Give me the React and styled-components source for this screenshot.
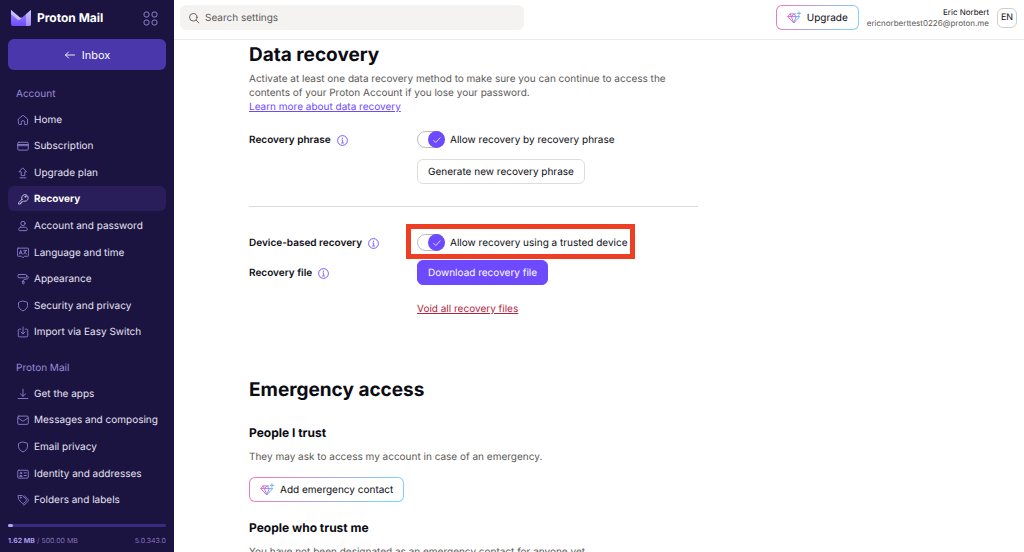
import React from "react";
import styled, { createGlobalStyle, css } from "styled-components";

const GlobalStyle = createGlobalStyle`
  *, *::before, *::after { box-sizing: border-box; }
  html, body, #root { height: 100%; }
  body {
    margin: 0;
    background: #ffffff;
    color: #0c0c14;
    font-family: Inter, "Liberation Sans", sans-serif;
    font-size: 10px;
    line-height: 14px;
    text-rendering: geometricPrecision;
  }
  h1, h2, h3, p, ul { margin: 0; padding: 0; }
  ul { list-style: none; }
  button, input { font: inherit; color: inherit; text-rendering: inherit; }
`;

const Page = styled.div`
  display: flex;
  height: 100vh;
  overflow: hidden;
`;

/* ---------- Sidebar ---------- */

const Sidebar = styled.aside`
  display: flex;
  flex-direction: column;
  flex: 0 0 174px;
  min-width: 0;
  padding: 0 8px;
  background: #1b1340;
  color: #e6e3f3;
`;

const Brand = styled.div`
  display: flex;
  align-items: center;
  justify-content: space-between;
  height: 36px;
  padding: 0 8px 0 3px;
`;

const BrandLink = styled.a`
  display: flex;
  align-items: center;
  gap: 6px;
  color: #ffffff;
  font-size: 12px;
  font-weight: 700;
  line-height: 20px;
  text-decoration: none;
`;

const AppsButton = styled.button`
  display: flex;
  padding: 0;
  border: 0;
  background: none;
  color: #8d7fc9;
`;

const InboxButton = styled.button`
  display: flex;
  align-items: center;
  justify-content: center;
  gap: 6px;
  flex: none;
  height: 31px;
  margin: 3px 0 10px;
  border: 0;
  border-radius: 6px;
  background: #4a37ab;
  color: #ffffff;
  font-size: 11px;
`;

const Nav = styled.nav`
  flex: 1;
  min-height: 0;
  overflow: hidden;
`;

const NavTitle = styled.h2`
  padding: 7px 8px 5px;
  color: #9c8cd9;
  font-size: 10px;
  font-weight: 400;
  line-height: 14px;
`;

const NavList = styled.ul`
  display: grid;
  grid-auto-rows: 1fr;
  grid-template-columns: minmax(0, 1fr);
  min-height: ${(p) => p.$height}px;
  margin-bottom: 9px;
`;

const NavItem = styled.li`
  display: flex;
  align-items: center;
`;

const NavLink = styled.a`
  display: flex;
  flex: 1;
  align-items: center;
  gap: 5px;
  min-width: 0;
  height: 25px;
  padding: 1px 0 0 9px;
  border-radius: 6px;
  color: #e6e3f3;
  text-decoration: none;
  white-space: nowrap;
  svg { flex: none; color: #9080d2; }
  ${(p) =>
    p.$active &&
    css`
      background: #291e59;
      color: #ffffff;
      font-weight: 700;
      svg { color: #cfc8ee; }
    `}
`;

const Storage = styled.footer`
  flex: none;
  padding-bottom: 4px;
`;

const Track = styled.div`
  height: 3px;
  margin-bottom: 7px;
  border-radius: 2px;
  background: #3b2b80;
`;

const Fill = styled.div`
  width: 5px;
  height: 3px;
  border-radius: 2px;
  background: #b5a6f5;
`;

const StorageText = styled.div`
  display: flex;
  justify-content: space-between;
  color: #8375bd;
  font-size: 7px;
  line-height: 14px;
  strong { color: #a999ea; font-weight: 700; }
`;

/* ---------- Main ---------- */

const Main = styled.div`
  display: flex;
  flex: 1;
  flex-direction: column;
  min-width: 0;
`;

const Header = styled.header`
  display: flex;
  align-items: center;
  justify-content: space-between;
  flex: none;
  height: 40px;
  padding: 0 7px 4px 6px;
  border-bottom: 1px solid #eaeaea;
`;

const Search = styled.label`
  display: flex;
  align-items: center;
  gap: 5px;
  flex: 0 1 344px;
  height: 25px;
  padding: 0 8px;
  border-radius: 6px;
  background: #f4f3f2;
  color: #5c5958;
`;

const SearchInput = styled.input`
  flex: 1;
  min-width: 0;
  padding: 0;
  border: 0;
  outline: 0;
  background: none;
  &::placeholder { color: #5c5958; opacity: 1; }
`;

const Account = styled.div`
  display: flex;
  align-items: center;
  gap: 8px;
`;

const Button = styled.button`
  display: inline-flex;
  align-items: center;
  justify-content: center;
  gap: 6px;
  height: 25px;
  padding: 0 10px;
  border: 1px solid #dedddc;
  border-radius: 6px;
  background: #ffffff;
  white-space: nowrap;
  ${(p) =>
    p.$variant === "solid" &&
    css`
      border-color: #6d4aff;
      background: #6d4aff;
      color: #ffffff;
    `}
  ${(p) =>
    p.$variant === "gradient" &&
    css`
      border-color: transparent;
      background:
        linear-gradient(#ffffff, #ffffff) padding-box,
        linear-gradient(120deg, #f078be 5%, #b9a2e0 45%, #7fd2fb 90%) border-box;
    `}
`;

const UserText = styled.div`
  color: #5c5958;
  font-size: 8px;
  line-height: 11px;
  text-align: right;
  strong { display: block; color: #0c0c14; font-weight: 400; }
`;

const Avatar = styled.button`
  width: 20px;
  height: 20px;
  padding: 0;
  border: 1px solid #d1cfcd;
  border-radius: 6px;
  background: #ffffff;
  font-size: 9px;
  line-height: 14px;
`;

const Content = styled.main`
  flex: 1;
  min-height: 0;
  padding: 2px 40px 40px 75px;
  overflow: auto;
  scrollbar-width: none;
`;

const Section = styled.section`
  max-width: 449px;
  margin-bottom: ${(p) => p.$after || 0}px;
`;

const Title = styled.h1`
  font-size: 19px;
  font-weight: 700;
  line-height: 26px;
`;

const Subtitle = styled.h2`
  margin-bottom: 8px;
  padding-top: 1px;
  font-size: 12px;
  font-weight: 700;
  line-height: 18px;
`;

const Text = styled.p`
  max-width: 420px;
  color: #5c5958;
  line-height: 14px;
`;

const TextLink = styled.a`
  color: ${(p) => (p.$danger ? "#b4233c" : "#6d4aff")};
  text-decoration: underline;
`;

const Settings = styled.div`
  padding: ${(p) => p.$top}px 0 ${(p) => p.$bottom || 0}px;
  ${(p) => p.$ruled && css`border-bottom: 1px solid #dadada;`}
`;

const Row = styled.div`
  display: grid;
  grid-template-columns: 168px 1fr;
  align-items: center;
  margin-bottom: ${(p) => p.$after || 0}px;
`;

const RowLabel = styled.div`
  display: flex;
  align-items: center;
  gap: 6px;
  font-weight: 600;
`;

const InfoButton = styled.button`
  display: flex;
  padding: 1px 0 0;
  border: 0;
  background: none;
  color: #6d4aff;
`;

const RowControl = styled.div`
  position: relative;
  grid-column: 2;
  justify-self: start;
`;

const ToggleLabel = styled.label`
  display: flex;
  align-items: center;
  gap: 5px;
  white-space: nowrap;
`;

const ToggleInput = styled.input`
  appearance: none;
  display: grid;
  width: 28px;
  height: 17px;
  margin: 0;
  border: 1px solid #b9b8c0;
  border-radius: 9px;
  background: #ffffff;
  grid-area: 1 / 1;
`;

const ToggleBox = styled.span`
  display: grid;
`;

const Knob = styled.span`
  display: grid;
  place-items: center;
  justify-self: end;
  grid-area: 1 / 1;
  z-index: 1;
  width: 17px;
  height: 17px;
  border-radius: 50%;
  background: #6d4aff;
  color: #ffffff;
  pointer-events: none;
`;

const Highlight = styled.div`
  position: absolute;
  inset: -10px -7px -8px -11px;
  border: 5px solid #ec3f23;
  pointer-events: none;
`;

/* ---------- Icons ---------- */

const Icon = ({ size = 12, children }) => (
  <svg width={size} height={size} viewBox="0 0 16 16" fill="none" stroke="currentColor"
    strokeWidth="1.2" strokeLinecap="round" strokeLinejoin="round" aria-hidden="true">
    {children}
  </svg>
);

const icons = {
  home: <path d="M2 6.6 7.1 2.3a1.4 1.4 0 0 1 1.8 0L14 6.6V13a1 1 0 0 1-1 1h-2.8v-3a2.2 2.2 0 0 0-4.4 0v3H3a1 1 0 0 1-1-1z" />,
  card: <><rect x="1" y="3" width="14" height="10.5" rx="1.5" /><path d="M1 6h14M1 7.6h14" /></>,
  upgrade: <path d="M8 1.5 12.8 6.4H10.4V11.5H5.6V6.4H3.2zM4 14.4h8" />,
  key: <><path d="M6.6 8.6 2 12.900v1.800h2.700v-1.500h1.600v-1.600h1.500l.9-1A4.400 4.400 0 1 0 6.600 8.600z" /><circle cx="11.200" cy="4.900" r=".8" /></>,
  user: <><circle cx="8" cy="4.6" r="2.9" /><path d="M4.7 9.6h6.6c1.4 0 2.4 1.6 2.4 3.3 0 .9-.5 1.3-1.3 1.3H3.6c-.8 0-1.3-.4-1.3-1.3 0-1.7 1-3.3 2.4-3.3z" /></>,
  language: <><path d="M1.500 1.500h13a1 1 0 0 1 1 1v8.800a1 1 0 0 1-1 1H10l-2 2.200-2-2.200H1.500a1 1 0 0 1-1-1V2.500a1 1 0 0 1 1-1z" /><path d="m3.200 9.400 1.800-5 1.800 5M3.800 8h2.400M9 4.500h4M9 9.400l3.500-4.800M9.400 6.400l3.600 3" /></>,
  roller: <><rect x="1.3" y="2" width="11.4" height="4.3" rx="1.3" /><path d="M12.7 4.1h1a1.3 1.3 0 0 1 1.3 1.3v1.1a1.3 1.3 0 0 1-1.1 1.3L9.5 8.7a1.3 1.3 0 0 0-1 1.2v1M7.4 10.9h2v2.9a.9.9 0 0 1-.9.9h-.2a.9.9 0 0 1-.9-.9z" /></>,
  shield: <path d="m8 1.4 5.3 1.4c.4.1.7.4.7.9v3.8c0 3.1-2.6 5.6-6 7.1-3.400-1.500-6-4-6-7.100V3.700c0-.5.3-.8.7-.9z" />,
  importBox: <path d="M5 4.200H3A1.300 1.300 0 0 0 1.700 5.500v7.700A1.300 1.300 0 0 0 3 14.500h10a1.300 1.300 0 0 0 1.300-1.300V5.500A1.300 1.300 0 0 0 13 4.200h-2M8 1.300v9.200M5.200 7.900 8 10.600l2.800-2.700" />,
  download: <path d="M8 1.500v9.500M4.500 7.700 8 11l3.500-3.300M1.500 14h13" />,
  mail: <><rect x="1" y="2.800" width="14" height="11" rx="1.500" /><path d="m1.300 5 5.500 4a2 2 0 0 0 2.400 0l5.500-4" /></>,
  idCard: <><rect x="1" y="3" width="14" height="10.500" rx="1.300" /><circle cx="5.200" cy="6.800" r="1" /><path d="M3.400 10.700c.3-1.500 3.300-1.500 3.600 0zM9.500 6.500h3M9.500 10h3" /></>,
  tag: <><path d="M2 2h4.600a1.500 1.500 0 0 1 1 .4l4.800 4.900a1.300 1.300 0 0 1 0 1.800l-3.300 3.300a1.300 1.300 0 0 1-1.800 0L2.400 7.600a1.500 1.500 0 0 1-.4-1z" /><path d="m10 2.400 4.600 4.700a2 2 0 0 1 0 2.700l-4.400 4.500a1.500 1.500 0 0 1-2 .1" /><circle cx="4.900" cy="4.900" r=".7" /></>,
};

const AppsIcon = () => (
  <svg width="15" height="15" viewBox="0 0 15 15" fill="none" stroke="currentColor" aria-hidden="true">
    <rect x="1" y="1" width="5" height="5" rx="2" />
    <rect x="9" y="1" width="5" height="5" rx="2" />
    <rect x="1" y="9" width="5" height="5" rx="2" />
    <rect x="9" y="9" width="5" height="5" rx="2" />
  </svg>
);

const MailLogo = () => (
  <svg width="20" height="16" viewBox="0 0 20 16" aria-hidden="true">
    <defs>
      <linearGradient id="logo-base" x1="0" y1="0" x2="0" y2="1">
        <stop offset="0" stopColor="#9d8cff" />
        <stop offset="1" stopColor="#6d4aff" />
      </linearGradient>
      <linearGradient id="logo-side" x1="0" y1="0" x2="0" y2="1">
        <stop offset="0" stopColor="#cfc3ff" />
        <stop offset="1" stopColor="#a18cf5" />
      </linearGradient>
    </defs>
    <path d="M0 0 8.600 7.200a2.200 2.200 0 0 0 2.800 0L20 0v14a2 2 0 0 1-2 2H2a2 2 0 0 1-2-2z" fill="url(#logo-base)" />
    <path d="M15 4.200 20 0v14a2 2 0 0 1-2 2h-3z" fill="url(#logo-side)" />
    <path d="M0 0 8.600 7.200a2.200 2.200 0 0 0 2.800 0L12.200 6.600 9.400 9.300a2.500 2.500 0 0 1-3.300 0L0 4z" fill="#c9bcff" />
  </svg>
);

const DiamondIcon = () => (
  <svg width="14" height="14" viewBox="0 0 16 16" fill="none" stroke="url(#diamond-stroke)"
    strokeWidth="1.100" strokeLinejoin="round" strokeLinecap="round" aria-hidden="true">
    <defs>
      <linearGradient id="diamond-stroke" gradientUnits="userSpaceOnUse" x1="1" y1="6" x2="15" y2="8">
        <stop offset="0" stopColor="#f05fb8" />
        <stop offset=".55" stopColor="#9b83e6" />
        <stop offset="1" stopColor="#5cc8fa" />
      </linearGradient>
    </defs>
    <path d="M10 3.300H3.500L1 6.400l6.700 7.300 6.700-7.300-.7-.9M1 6.400h13.300M5 6.400l2.700 7.100 2.900-7.100M3.600 3.500 5 6.400l2.700-2.900 2.900 2.900M13.700.8v3.800M11.800 2.700h3.800" />
  </svg>
);

const InfoIcon = () => (
  <svg width="11" height="11" viewBox="0 0 11 11" fill="none" stroke="currentColor" aria-hidden="true">
    <circle cx="5.500" cy="5.500" r="4.900" strokeWidth=".9" />
    <path d="M4.500 4.900h1.100v3M4.200 8h2.700" strokeWidth=".8" />
    <circle cx="5.400" cy="3.200" r=".6" fill="currentColor" stroke="none" />
  </svg>
);

/* ---------- Data ---------- */

const accountLinks = [
  ["home", "Home"],
  ["card", "Subscription"],
  ["upgrade", "Upgrade plan"],
  ["key", "Recovery"],
  ["user", "Account and password"],
  ["language", "Language and time"],
  ["roller", "Appearance"],
  ["shield", "Security and privacy"],
  ["importBox", "Import via Easy Switch"],
];

const mailLinks = [
  ["download", "Get the apps"],
  ["mail", "Messages and composing"],
  ["shield", "Email privacy"],
  ["idCard", "Identity and addresses"],
  ["tag", "Folders and labels"],
];

const NavGroup = ({ title, links, height, current }) => (
  <>
    <NavTitle>{title}</NavTitle>
    <NavList $height={height}>
      {links.map(([icon, label]) => (
        <NavItem key={label}>
          <NavLink href="#" $active={label === current} aria-current={label === current ? "page" : undefined}>
            <Icon>{icons[icon]}</Icon>
            {label}
          </NavLink>
        </NavItem>
      ))}
    </NavList>
  </>
);

const Toggle = ({ children }) => (
  <ToggleLabel>
    <ToggleBox>
      <ToggleInput type="checkbox" defaultChecked />
      <Knob>
        <Icon size={10}><path d="m2.500 8.500 3.500 3.500 7-7.500" /></Icon>
      </Knob>
    </ToggleBox>
    {children}
  </ToggleLabel>
);

const LabelWithInfo = ({ children }) => (
  <RowLabel>
    {children}
    <InfoButton aria-label={`More about ${children}`}><InfoIcon /></InfoButton>
  </RowLabel>
);

export default function App() {
  return (
    <>
      <GlobalStyle />
      <Page>
        <Sidebar>
          <Brand>
            <BrandLink href="#"><MailLogo />Proton Mail</BrandLink>
            <AppsButton aria-label="Proton apps"><AppsIcon /></AppsButton>
          </Brand>
          <InboxButton>
            <Icon><path d="M14 8H2M6 4 2 8l4 4" /></Icon>
            Inbox
          </InboxButton>
          <Nav>
            <NavGroup title="Account" links={accountLinks} height={239} current="Recovery" />
            <NavGroup title="Proton Mail" links={mailLinks} height={133} />
          </Nav>
          <Storage>
            <Track><Fill /></Track>
            <StorageText>
              <span><strong>1.62 MB</strong> / 500.00 MB</span>
              <span>5.0.343.0</span>
            </StorageText>
          </Storage>
        </Sidebar>

        <Main>
          <Header>
            <Search>
              <Icon><circle cx="7" cy="7" r="5" /><path d="m10.800 10.800 3.700 3.700" /></Icon>
              <SearchInput type="search" placeholder="Search settings" aria-label="Search settings" />
            </Search>
            <Account>
              <Button $variant="gradient"><DiamondIcon />Upgrade</Button>
              <UserText>
                <strong>Eric Norbert</strong>
                ericnorberttest0226@proton.me
              </UserText>
              <Avatar>EN</Avatar>
            </Account>
          </Header>

          <Content>
            <Section $after={61}>
              <Title>Data recovery</Title>
              <Settings $top={4}>
                <Text>
                  Activate at least one data recovery method to make sure you can continue to access the
                  contents of your Proton Account if you lose your password.
                </Text>
                <TextLink href="#">Learn more about data recovery</TextLink>
              </Settings>
              <Settings $top={17} $bottom={22} $ruled>
                <Row $after={11}>
                  <LabelWithInfo>Recovery phrase</LabelWithInfo>
                  <RowControl><Toggle>Allow recovery by recovery phrase</Toggle></RowControl>
                </Row>
                <Row>
                  <RowControl><Button>Generate new recovery phrase</Button></RowControl>
                </Row>
              </Settings>
              <Settings $top={27}>
                <Row $after={9}>
                  <LabelWithInfo>Device-based recovery</LabelWithInfo>
                  <RowControl>
                    <Toggle>Allow recovery using a trusted device</Toggle>
                    <Highlight />
                  </RowControl>
                </Row>
                <Row $after={17}>
                  <LabelWithInfo>Recovery file</LabelWithInfo>
                  <RowControl><Button $variant="solid">Download recovery file</Button></RowControl>
                </Row>
                <Row>
                  <RowControl><TextLink href="#" $danger>Void all recovery files</TextLink></RowControl>
                </Row>
              </Settings>
            </Section>

            <Section $after={20}>
              <Title>Emergency access</Title>
            </Section>
            <Section $after={16}>
              <Subtitle>People I trust</Subtitle>
              <Text>They may ask to access my account in case of an emergency.</Text>
              <Settings $top={13}>
                <Button $variant="gradient"><DiamondIcon />Add emergency contact</Button>
              </Settings>
            </Section>
            <Section>
              <Subtitle>People who trust me</Subtitle>
              <Text>You have not been designated as an emergency contact for anyone yet.</Text>
            </Section>
          </Content>
        </Main>
      </Page>
    </>
  );
}
